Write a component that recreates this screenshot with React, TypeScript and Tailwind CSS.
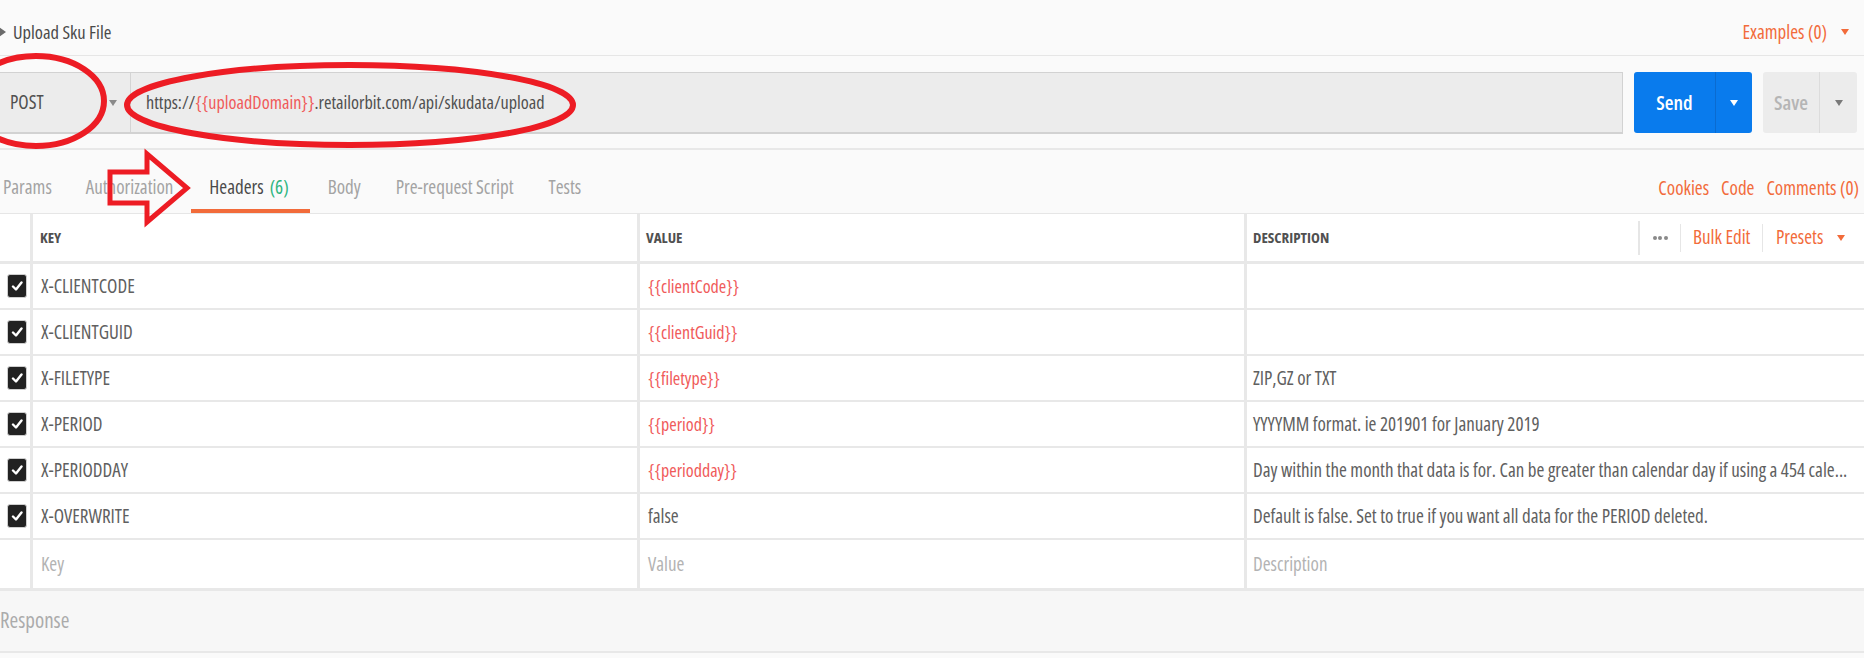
import React from "react";

const Caret = ({ color, size = 8 }: { color: string; size?: number }) => (
  <svg width={size} height={size * 0.75} viewBox="0 0 8 6">
    <polygon points="0,0 8,0 4,6" fill={color} />
  </svg>
);

const Check = () => (
  <div className="w-[20px] h-[24px] rounded-[3px] bg-[#222222] border border-[#cfcfcf] flex items-center justify-center">
    <svg width="12" height="12" viewBox="0 0 12 12">
      <path d="M2 6.5 L5 9.5 L10.5 2.5" stroke="#ffffff" strokeWidth="2.4" fill="none" strokeLinecap="round" strokeLinejoin="round" />
    </svg>
  </div>
);

type Row = { key: string; value: string; isVar: boolean; desc: string };

const rows: Row[] = [
  { key: "X-CLIENTCODE", value: "{{clientCode}}", isVar: true, desc: "" },
  { key: "X-CLIENTGUID", value: "{{clientGuid}}", isVar: true, desc: "" },
  { key: "X-FILETYPE", value: "{{filetype}}", isVar: true, desc: "ZIP,GZ or TXT" },
  { key: "X-PERIOD", value: "{{period}}", isVar: true, desc: "YYYYMM format. ie 201901 for January 2019" },
  {
    key: "X-PERIODDAY",
    value: "{{periodday}}",
    isVar: true,
    desc: "Day within the month that data is for. Can be greater than calendar day if using a 454 cale...",
  },
  { key: "X-OVERWRITE", value: "false", isVar: false, desc: "Default is false. Set to true if you want all data for the PERIOD deleted." },
];

export default function App() {
  return (
    <div className="relative w-[1864px] h-[658px] overflow-hidden bg-[#fafafa] font-['Open_Sans',sans-serif] [font-stretch:75%] text-[#5a5a5a]">
      {/* Title row */}
      <div className="h-[56px] border-b border-[#e6e6e6] flex items-center justify-between pt-[8px]">
        <div className="flex items-center">
          <svg width="8" height="12" viewBox="0 0 8 12" className="ml-[-1px]">
            <polygon points="0,1 7,6 0,11" fill="#6b6b6b" />
          </svg>
          <span className="ml-[6px] text-[18.5px] leading-[24px] text-[#4a4a4a]">Upload Sku File</span>
        </div>
        <div className="flex items-center gap-[14px] pr-[15px] text-[19px] leading-[24px] text-[#f26b3a]">
          <span>Examples (0)</span>
          <Caret color="#f26b3a" />
        </div>
      </div>

      {/* URL row */}
      <div className="h-[94px] pt-[16px] border-b-2 border-[#e8e8e8] flex items-start pr-[7px]">
        <div className="flex-1 h-[62px] flex bg-[#ececec] border-t border-b-2 border-r border-[#d2d2d2]">
          <div className="w-[131px] flex items-center justify-between border-r border-[#d4d4d4] pl-[10px] pr-[13px]">
            <span className="text-[19px] text-[#505050]">POST</span>
            <Caret color="#8a8a8a" />
          </div>
          <div className="flex items-center pl-[15px] text-[18.2px] text-[#505050]">
            <span>https://</span>
            <span className="text-[#f05a5a]">{"{{uploadDomain}}"}</span>
            <span>.retailorbit.com/api/skudata/upload</span>
          </div>
        </div>
        <div className="ml-[11px] w-[118px] h-[61px] flex rounded-[3px] bg-[#097bed] text-white">
          <div className="w-[82px] flex items-center justify-center border-r border-[#0a6bd0] text-[20px] font-semibold">Send</div>
          <div className="flex-1 flex items-center justify-center">
            <Caret color="#ffffff" />
          </div>
        </div>
        <div className="ml-[11px] w-[94px] h-[61px] flex rounded-[3px] bg-[#ececec]">
          <div className="w-[57px] flex items-center justify-center border-r border-[#dcdcdc] text-[20px] font-semibold text-[#b5b5b5]">Save</div>
          <div className="flex-1 flex items-center justify-center">
            <Caret color="#7a7a7a" />
          </div>
        </div>
      </div>

      {/* Tabs */}
      <div className="h-[64px] border-b border-[#e6e6e6] flex items-stretch justify-between">
        <div className="flex items-stretch ml-[-14px] text-[19px] leading-[24px] text-[#a3a3a3]">
          <div className="px-[17px] flex items-end pb-[14px]">Params</div>
          <div className="pl-[17px] pr-[18px] flex items-end pb-[14px]">Authorization</div>
          <div className="pl-[18px] pr-[21px] flex items-end pb-[10px] border-b-4 border-[#f26b3a] text-[#4a4a4a]">
            Headers<span className="ml-[6px] text-[#2fb57f]">(6)</span>
          </div>
          <div className="pl-[18px] pr-[17px] flex items-end pb-[14px]">Body</div>
          <div className="pl-[18px] pr-[17px] flex items-end pb-[14px]">Pre-request Script</div>
          <div className="pl-[18px] pr-[17px] flex items-end pb-[14px]">Tests</div>
        </div>
        <div className="flex items-end pb-[13px] gap-[12px] pr-[5px] text-[19px] leading-[24px] text-[#f26b3a]">
          <span>Cookies</span>
          <span>Code</span>
          <span>Comments (0)</span>
        </div>
      </div>

      {/* Table */}
      <div className="bg-white">
        <div className="h-[50px] flex border-b-[3px] border-[#e8e8e8] text-[15px] font-bold text-[#505050]">
          <div className="w-[33px] border-r-[3px] border-[#e8e8e8]" />
          <div className="w-[607px] border-r-[3px] border-[#e8e8e8] flex items-center pl-[7px]">KEY</div>
          <div className="w-[607px] border-r-[3px] border-[#e8e8e8] flex items-center pl-[6px]">VALUE</div>
          <div className="flex-1 flex items-center pl-[6px]">
            <span className="flex-1">DESCRIPTION</span>
            <div className="flex items-center h-full font-normal text-[19px]">
              <div className="h-[34px] border-l-2 border-[#e6e6e6] w-[42px] flex items-center justify-center gap-[1.5px]">
                <span className="w-[4px] h-[4px] rounded-full bg-[#8a8a8a]" />
                <span className="w-[4px] h-[4px] rounded-full bg-[#8a8a8a]" />
                <span className="w-[4px] h-[4px] rounded-full bg-[#8a8a8a]" />
              </div>
              <div className="h-[28px] w-[82px] border-l border-[#e6e6e6] pl-[12px] flex items-center text-[#f26b3a]">Bulk Edit</div>
              <div className="h-[28px] w-[102px] border-l border-[#e6e6e6] pl-[13px] flex items-center gap-[14px] text-[#f26b3a]">
                Presets
                <Caret color="#f26b3a" />
              </div>
            </div>
          </div>
        </div>
        {rows.map((r) => (
          <div key={r.key} className="h-[46px] flex border-b-2 border-[#e8e8e8] text-[19px]">
            <div className="w-[33px] border-r-[3px] border-[#e8e8e8] flex items-center pl-[7px]">
              <Check />
            </div>
            <div className="w-[607px] border-r-[3px] border-[#e8e8e8] flex items-center pl-[8px] text-[#606060]">{r.key}</div>
            <div
              className={
                r.isVar
                  ? "w-[607px] border-r-[3px] border-[#e8e8e8] flex items-center pl-[8px] text-[18px] text-[#f05a5a]"
                  : "w-[607px] border-r-[3px] border-[#e8e8e8] flex items-center pl-[8px] text-[#606060]"
              }
            >
              {r.value}
            </div>
            <div className="flex-1 flex items-center pl-[6px] text-[#606060] whitespace-nowrap overflow-hidden">{r.desc}</div>
          </div>
        ))}
        <div className="h-[51px] flex border-b-[3px] border-[#e8e8e8] text-[19px] text-[#b3b3b3]">
          <div className="w-[33px] border-r-[3px] border-[#e8e8e8]" />
          <div className="w-[607px] border-r-[3px] border-[#e8e8e8] flex items-center pl-[8px]">Key</div>
          <div className="w-[607px] border-r-[3px] border-[#e8e8e8] flex items-center pl-[8px]">Value</div>
          <div className="flex-1 flex items-center pl-[6px]">Description</div>
        </div>
      </div>

      {/* Response */}
      <div className="h-[62px] bg-[#f7f7f7] border-b-2 border-[#e8e8e8] flex items-center">
        <span className="text-[21px] text-[#ababab]">Response</span>
      </div>

      {/* Red annotations */}
      <svg className="absolute left-0 top-0 pointer-events-none" width="1864" height="658" viewBox="0 0 1864 658">
        <ellipse cx="36" cy="101" rx="68" ry="45" fill="none" stroke="#ed1c24" strokeWidth="6" />
        <ellipse cx="350" cy="105" rx="223" ry="40" fill="none" stroke="#ed1c24" strokeWidth="6" />
        <polygon
          points="110,172 147,172 147,154 187,188 147,222 147,203 110,203"
          fill="none"
          stroke="#ed1c24"
          strokeWidth="5"
          strokeLinejoin="miter"
        />
      </svg>
    </div>
  );
}
